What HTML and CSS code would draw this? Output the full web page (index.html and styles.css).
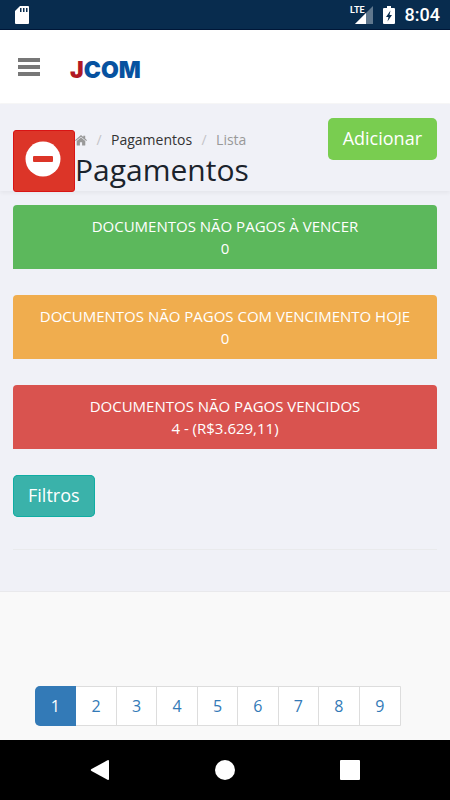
FILE: index.html
```html
<!DOCTYPE html>
<html lang="pt-BR">
<head>
<meta charset="utf-8">
<meta name="viewport" content="width=device-width, initial-scale=1">
<title>Pagamentos</title>
<link rel="stylesheet" href="styles.css">
</head>
<body>
<div class="status">
  <svg class="sd" viewBox="0 0 16 20" width="16" height="20" aria-hidden="true"><path fill="#fff" d="M6 1h8q1 0 1 1v16q0 1-1 1H2q-1 0-1-1V6z"/><path fill="#082c4e" d="M6 3h1.500v4H6zM9 3h1.500v4H9zM12 3h1.500v4H12z"/></svg>
  <div class="status-right">
    <div class="signal">
      <svg viewBox="0 0 18 18" width="18" height="18" aria-hidden="true"><path fill="#60788e" d="M18 0v18H0z"/><path fill="#fff" d="M11 7v11H0z"/></svg>
      <span class="lte">LTE</span>
    </div>
    <svg viewBox="0 0 12 18" width="12" height="18" aria-hidden="true"><path fill="#fff" d="M4 0h4v2h3q1 0 1 1v14q0 1-1 1H1q-1 0-1-1V3q0-1 1-1h3z"/><path fill="#082c4e" d="M7.500 4.500 3 11h2.500l-1 4.500L9 9H6.500z"/></svg>
    <span class="clock">8:04</span>
  </div>
</div>
<header class="topbar">
  <button class="menu" type="button" aria-label="Menu"><svg viewBox="0 0 22 18" width="22" height="18" aria-hidden="true"><path fill="#777" d="M0 0h22v4H0zM0 7h22v4H0zM0 14h22v4H0z"/></svg></button>
  <a class="logo" href="#"><span class="logo-j">J</span>COM</a>
</header>
<main class="content">
  <div class="page-head">
    <div class="badge"><svg viewBox="0 0 36 36" width="36" height="36" aria-hidden="true"><circle cx="18" cy="18" r="17.500" fill="#fff"/><rect x="8" y="15" width="20" height="6" rx="1" fill="#dc3528"/></svg></div>
    <div class="heading">
      <nav class="crumbs" aria-label="Trilha">
        <a class="home" href="#" aria-label="Início"><svg viewBox="0 0 12 11" width="12" height="11" aria-hidden="true"><path fill="#999" d="M6 0 8.300 2V.8h1.900v2.800L12 5.200l-.7.900L6 1.700.7 6.100 0 5.200zM6 2.400l4.300 3.600V10q0 .6-.6.6H7.100V7.300H4.900v3.300H2.300q-.6 0-.6-.6V6z"/></svg></a>
        <span class="sep">/</span><a class="crumb" href="#">Pagamentos</a><span class="sep">/</span><span class="current">Lista</span>
      </nav>
      <h1>Pagamentos</h1>
    </div>
    <button class="btn add" type="button">Adicionar</button>
  </div>
  <div class="body">
    <section class="card green"><p>DOCUMENTOS NÃO PAGOS À VENCER</p><p>0</p></section>
    <section class="card orange"><p>DOCUMENTOS NÃO PAGOS COM VENCIMENTO HOJE</p><p>0</p></section>
    <section class="card red"><p>DOCUMENTOS NÃO PAGOS VENCIDOS</p><p>4 - (R$3.629,11)</p></section>
    <button class="btn filter" type="button">Filtros</button>
    <hr>
  </div>
</main>
<footer class="list-foot">
  <nav class="pages" aria-label="Páginas">
    <a class="active" href="#" aria-current="page">1</a><a href="#">2</a><a href="#">3</a><a href="#">4</a><a href="#">5</a><a href="#">6</a><a href="#">7</a><a href="#">8</a><a href="#">9</a>
  </nav>
</footer>
<div class="android">
  <button type="button" aria-label="Voltar"><svg viewBox="0 0 20 20" width="20" height="20" aria-hidden="true"><path fill="#fff" d="M17.500.3q1.500-.7 1.500 1v17.400q0 1.700-1.500 1L1.500 10.900q-1.500-.9 0-1.800z"/></svg></button>
  <button type="button" aria-label="Início"><svg viewBox="0 0 20 20" width="20" height="20" aria-hidden="true"><circle cx="10" cy="10" r="10" fill="#fff"/></svg></button>
  <button type="button" aria-label="Recentes"><svg viewBox="0 0 20 20" width="20" height="20" aria-hidden="true"><rect width="20" height="20" rx="1" fill="#fff"/></svg></button>
</div>
</body>
</html>
```
FILE: styles.css
```css
* { box-sizing: border-box; }
body {
  margin: 0;
  min-height: 100vh;
  display: flex;
  flex-direction: column;
  background: #f9f9f9;
  font-family: "Open Sans", sans-serif;
  font-size: 14px;
}
a { text-decoration: none; }
button { border: 0; padding: 0; background: none; font: inherit; cursor: pointer; }
svg { display: block; }
h1, p { margin: 0; font-weight: 400; }

.status {
  height: 30px;
  padding: 0 10px 0 14px;
  display: flex;
  align-items: center;
  justify-content: space-between;
  background: #082c4e;
  border-bottom: 1px solid #001738;
  color: #fff;
}
.status-right { display: flex; align-items: center; gap: 10px; }
.signal { position: relative; }
.lte {
  position: absolute;
  right: 8px;
  top: -1px;
  font: 700 9px/10px "Liberation Sans Narrow", Roboto, sans-serif;
}
.clock { font: 500 18px/28px Roboto, sans-serif; }

.topbar {
  height: 74px;
  padding: 0 18px;
  display: flex;
  align-items: center;
  gap: 30px;
  background: #fff;
  border-bottom: 1px solid #f7f7f7;
}
.logo { padding-top: 6px; color: #0752a0; font: 900 23px/32px Inter, sans-serif; }
.logo-j { color: #b11823; }

.content { background: #f0f1f7; border-bottom: 1px solid #e9e9ec; }
.page-head {
  height: 87px;
  padding: 14px 13px 0;
  display: flex;
  align-items: flex-start;
  box-shadow: 0 2px 4px rgba(0, 0, 0, .05);
}
.badge {
  width: 62px;
  height: 62px;
  margin-top: 12px;
  display: grid;
  place-items: center;
  padding-bottom: 4px;
  padding-right: 3px;
  background: #dc3528;
  border: 1px solid #d91414;
  border-radius: 3px;
}
.heading { flex: 1; padding-top: 12px; }
.crumbs { display: flex; align-items: center; height: 20px; line-height: 20px; color: #999; }
.sep { width: 24px; text-align: center; color: #c4c4c8; }
.crumb { color: #333; }
h1 { font-size: 30px; line-height: 40px; color: #1b232c; }
.btn {
  height: 42px;
  padding: 0 15px 3px;
  border-radius: 5px;
  color: #fff;
  font-size: 18px;
}
.add { background: #79cd50; }
.filter { display: block; background: #3ab2aa; box-shadow: inset 0 0 0 1px #10ada3; }

.body { padding: 14px 13px 41px; }
.card {
  height: 64px;
  margin-bottom: 26px;
  padding-top: 10px;
  border-radius: 4px 4px 0 0;
  color: #fff;
  text-align: center;
  font-size: 15px;
  line-height: 22px;
}
.green { background: #5cb85c; }
.orange { background: #f0ad4e; }
.red { background: #d9534f; }
hr { margin: 32px 0 0; border: 0; border-top: 1px solid #e9eaec; }

.list-foot { flex: 1; padding: 94px 49px 14px 35px; }
.pages {
  display: grid;
  grid-template-columns: repeat(9, 1fr);
  height: 40px;
  background: #fff;
  border: 1px solid #ddd;
  border-radius: 5px 0 0 5px;
}
.pages a {
  display: grid;
  place-items: center;
  border-right: 1px solid #ddd;
  color: #337ab7;
  font-size: 16px;
}
.pages a:last-child { border-right: 0; }
.pages .active { margin: -1px 0 -1px -1px; background: #337ab7; border-color: #337ab7; border-radius: 5px 0 0 5px; color: #fff; }

.android {
  height: 60px;
  padding: 0 37px;
  display: flex;
  align-items: center;
  justify-content: space-around;
  background: #000;
}
.android button { width: 40px; display: grid; place-items: center; }
```
